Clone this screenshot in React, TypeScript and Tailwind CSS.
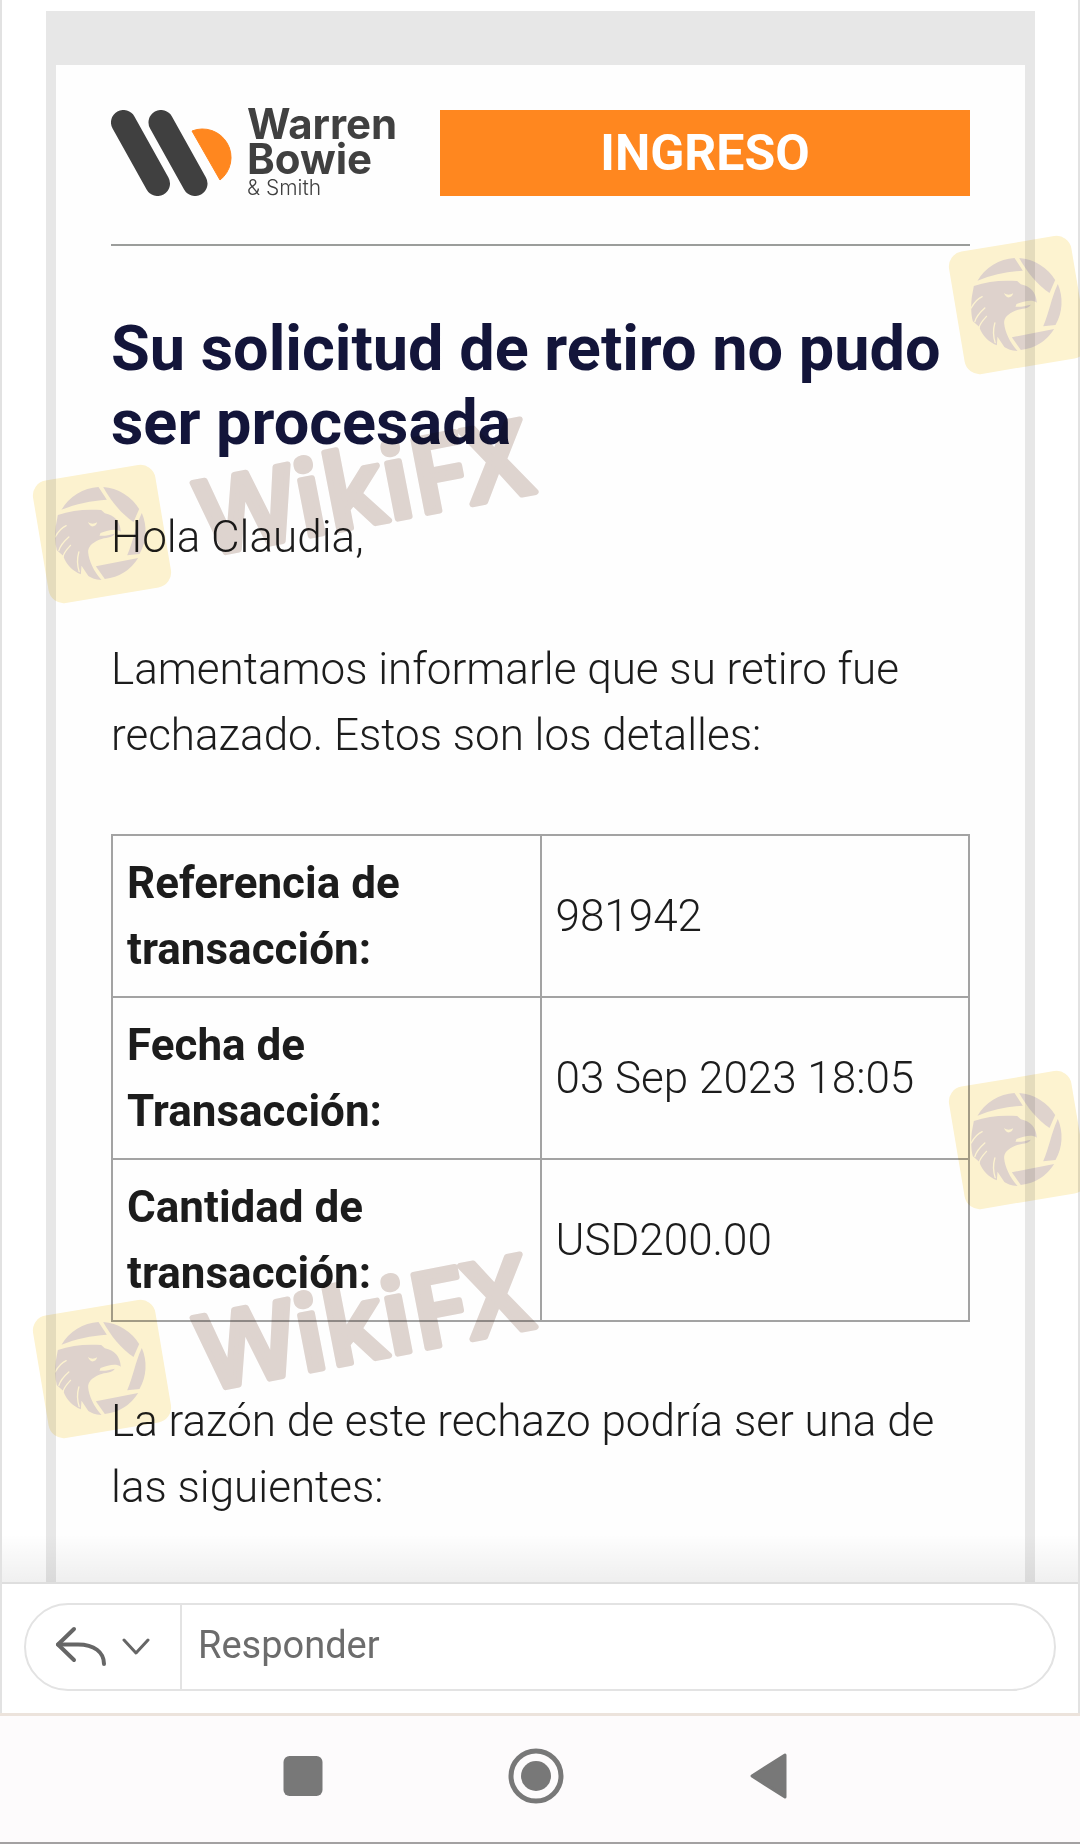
import clsx from "clsx";

const DETAILS = [
  { label: "Referencia de transacción:", value: "981942" },
  { label: "Fecha de Transacción:", value: "03 Sep 2023 18:05" },
  { label: "Cantidad de transacción:", value: "USD200.00" },
];

function BrandLogo() {
  return (
    <div className="flex items-start gap-3 text-[#404040]">
      <svg width="124" height="86" viewBox="0 0 124 86" aria-hidden="true">
        <g stroke="#404040" strokeWidth="25" strokeLinecap="round">
          <path d="M12.5 12.5 46.5 73.5" />
          <path d="M50 12.5 84 73.5" />
        </g>
        <path
          d="M81 21 A28.5 28.5 0 0 1 109 70 Z"
          fill="#ff871f"
          stroke="#ff871f"
          strokeLinejoin="round"
        />
      </svg>
      <div className="h-[86px] font-['Inter',sans-serif]">
        <div className="-mt-1 text-[42px] leading-[35px] font-bold">
          Warren
          <br />
          Bowie
        </div>
        <div className="text-[21px] leading-6">&amp; Smith</div>
      </div>
    </div>
  );
}

function EagleTile({ className }: { className?: string }) {
  return (
    <svg
      className={clsx("absolute", className)}
      width="150"
      height="150"
      viewBox="-75 -75 150 150"
      aria-hidden="true"
    >
      <rect
        x="-62"
        y="-62"
        width="124"
        height="124"
        rx="15"
        fill="#fdf3d0"
        transform="translate(1 1) rotate(-9.5)"
      />
      <g transform="scale(0.3333) translate(-234.5 -250)">
        <g fill="#dfd3cd">
          {/* shutter blades */}
          <path d="M116 180 A138 138 0 0 1 227 112 L252 150 C205 153 160 162 116 180 Z" />
          <path d="M241 112 A138 138 0 0 1 349 178 L332 217 C295 192 265 155 241 112 Z" />
          <path d="M357 190 A138 138 0 0 1 350 313 L313 317 C331 277 337 232 357 190 Z" />
          <path d="M219 350 L346 325 A138 138 0 0 1 246 388 Z" />
          {/* head and neck */}
          <path d="M105 196 C145 181 190 178 235 181 L246 191 C275 197 292 215 294 246 C281 236 258 240 233 250 L230 258 C245 260 258 256 276 252 C267 266 249 262 229 270 C206 280 195 292 196 308 C198 332 212 365 236 391 C217 390 202 383 196 378 L176 348 L174 374 C150 364 130 345 121 318 L102 302 C96 280 96 252 99 228 Z" />
        </g>
        <path
          d="M195 217 C205 224 214 223 223 218 C221 227 215 231 206 230 C201 227 198 222 195 217 Z"
          fill="#fdf3d0"
        />
        <g fill="none" stroke="#fdf3d0" strokeWidth="4" strokeLinecap="round">
          <path d="M130 228 C116 234 106 246 97 262" />
          <path d="M138 262 C122 276 112 288 108 303" />
          <path d="M143 287 C128 303 122 311 121 321" />
          <path d="M168 307 C162 328 164 350 169 366" />
        </g>
      </g>
    </svg>
  );
}

function WikiMark({ className }: { className?: string }) {
  return (
    <div className={clsx("absolute left-0 h-[288px] w-[580px]", className)}>
      <EagleTile className="top-[107px] left-[26px]" />
      <svg className="absolute inset-0" width="580" height="288" viewBox="0 0 580 288">
        <text
          x="0"
          y="0"
          transform="translate(206 205) rotate(-11)"
          fontFamily="Open Sans, sans-serif"
          fontWeight="600"
          fontSize="104"
          fill="#dfd5d0"
          stroke="#dfd5d0"
          strokeWidth="6"
          strokeLinejoin="round"
        >
          WikiFX
        </text>
      </svg>
    </div>
  );
}

function ReplyBar() {
  return (
    <div className="border-t-2 border-[#dedede] bg-white px-[22px] pt-[19px] pb-[22px]">
      <form className="flex h-[88px] overflow-hidden rounded-full border-2 border-[#e3e3e3]">
        <button
          type="button"
          aria-label="Opciones de respuesta"
          className="flex w-[156px] items-center justify-center gap-4 border-r-2 border-[#e3e3e3] text-[#666]"
        >
          <svg width="52" height="42" viewBox="0 0 52 42" fill="none" stroke="currentColor" strokeLinecap="round" strokeLinejoin="round">
            <path d="M20 3 L4 18.5 L20 34" strokeWidth="4" />
            <path d="M4 18.5 H24 C40 18.5 50 26 50 38" strokeWidth="4" />
          </svg>
          <svg width="30" height="18" viewBox="0 0 30 18" fill="none" stroke="currentColor" strokeWidth="3" strokeLinecap="round" strokeLinejoin="round">
            <path d="M2 2 L14 15 L26 2" />
          </svg>
        </button>
        <input
          type="text"
          aria-label="Responder"
          placeholder="Responder"
          className="min-w-0 flex-1 bg-transparent px-4 pb-1 text-[38px] text-[#333] outline-none placeholder:text-[#6c6c6c] placeholder:opacity-100"
        />
      </form>
    </div>
  );
}

function SystemNav() {
  return (
    <nav className="flex h-[131px] items-center justify-center gap-[177px] border-t-[3px] border-b-2 border-t-[#ece3dc] border-b-[#a3a1a2] bg-[#fdfbfc] pr-2 pb-[6px] text-[#787878]">
      <button type="button" aria-label="Recientes">
        <svg width="56" height="56" viewBox="0 0 56 56" fill="currentColor">
          <rect x="8.5" y="8" width="39" height="40" rx="6" />
        </svg>
      </button>
      <button type="button" aria-label="Inicio">
        <svg width="56" height="56" viewBox="0 0 56 56">
          <circle cx="28" cy="28" r="25" fill="none" stroke="currentColor" strokeWidth="5" />
          <circle cx="28" cy="28" r="15" fill="currentColor" />
        </svg>
      </button>
      <button type="button" aria-label="Atrás">
        <svg width="56" height="56" viewBox="0 0 56 56" fill="currentColor" stroke="currentColor" strokeWidth="3" strokeLinejoin="round">
          <path d="M11 28 L44 7 V49 Z" />
        </svg>
      </button>
    </nav>
  );
}

export default function App() {
  return (
    <div className="relative flex min-h-screen flex-col overflow-hidden bg-white font-['Roboto',sans-serif]">
      <div className="flex flex-1 flex-col border-x-2 border-[#e2e2e2]">
        <main className="relative flex flex-1 flex-col pt-[11px] pr-[43px] pl-[44px]">
          <div className="flex flex-1 flex-col bg-[#e7e7e7] px-[10px] pt-[54px]">
            <article className="flex-1 bg-[#fefefe] px-[55px] pt-[45px] pb-[60px] text-[44px] leading-[66px] font-light text-[#1c1c1c]">
              <header className="flex items-start justify-between">
                <BrandLogo />
                <a
                  href="#ingreso"
                  className="flex h-[86px] w-[530px] items-center justify-center bg-[#ff871f] text-[50px] leading-[86px] font-bold text-white"
                >
                  INGRESO
                </a>
              </header>
              <hr className="mt-12 border-t-2 border-[#9b9d9b]" />

              <h1 className="mt-[66px] text-[63px] leading-[74px] font-bold text-[#13153a]">
                Su solicitud de retiro no pudo ser procesada
              </h1>
              <p className="mt-11">Hola Claudia,</p>
              <p className="mt-[66px]">
                Lamentamos informarle que su retiro fue rechazado. Estos son los detalles:
              </p>

              <table className="mt-[66px] w-full table-fixed border-collapse">
                <tbody>
                  {DETAILS.map((row) => (
                    <tr key={row.label}>
                      <th scope="row" className="border-2 border-[#a3a3a3] p-[14px] pr-20 text-left font-bold">
                        {row.label}
                      </th>
                      <td className="border-2 border-[#a3a3a3] p-[14px]">{row.value}</td>
                    </tr>
                  ))}
                </tbody>
              </table>

              <p className="mt-[66px]">
                La razón de este rechazo podría ser una de las siguientes:
              </p>
            </article>
          </div>
          {/* fade above the reply bar */}
          <div className="pointer-events-none absolute inset-x-0 bottom-0 h-12 bg-gradient-to-b from-transparent to-black/6" />
        </main>
        <ReplyBar />
      </div>
      <SystemNav />

      <div className="pointer-events-none absolute inset-0 mix-blend-multiply">
        <WikiMark className="top-[351px]" />
        <WikiMark className="top-[1186px]" />
        <EagleTile className="top-[229px] -right-[12px]" />
        <EagleTile className="top-[1064px] -right-[12px]" />
      </div>
    </div>
  );
}
